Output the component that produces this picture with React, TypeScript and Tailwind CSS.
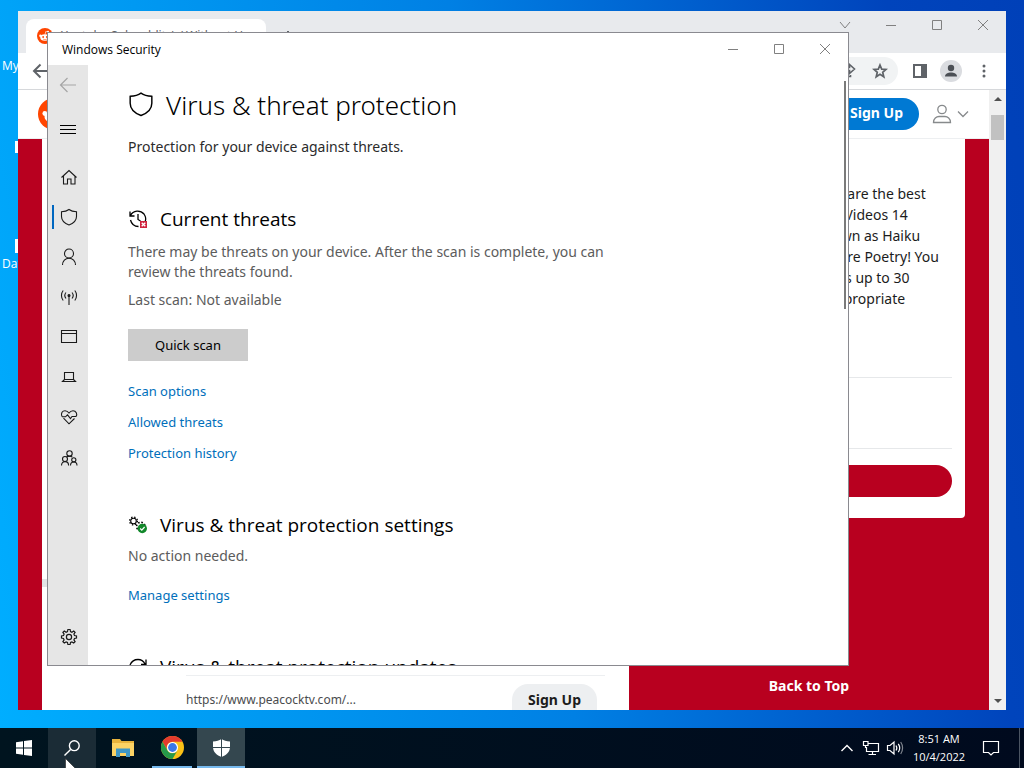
import type { ReactNode } from "react";

type IconProps = { children: ReactNode; size?: string; view?: string; width?: number };

function Icon({ children, size = "size-5", view = "0 0 20 20", width = 1 }: IconProps) {
  return (
    <svg className={`shrink-0 ${size}`} viewBox={view} fill="none" stroke="currentColor" strokeWidth={width} aria-hidden="true">
      {children}
    </svg>
  );
}

const shieldPath = "M10 2.5C12 4 14.5 4.6 17.5 4.7V9.5C17.5 14 14 16.5 10 18C6 16.5 2.5 14 2.5 9.5V4.7C5.5 4.6 8 4 10 2.5Z";

const navItems: { label: string; active?: boolean; icon: ReactNode }[] = [
  {
    label: "Home",
    icon: <path d="M2.5 10.5L10 3.5L17.5 10.5M4.5 9V17H8.5V12H12V17H16V9" />,
  },
  { label: "Virus & threat protection", active: true, icon: <path d={shieldPath} /> },
  {
    label: "Account protection",
    icon: (
      <>
        <circle cx="10" cy="6.5" r="4.5" />
        <path d="M3.5 18C3.5 14 6.3 11.2 10 11.2S16.5 14 16.5 18" />
      </>
    ),
  },
  {
    label: "Firewall & network protection",
    icon: (
      <>
        <path d="M10 9V18" />
        <circle cx="10" cy="8.5" r="1" fill="currentColor" />
        <path d="M7 5.5C5.6 7.2 5.6 9.8 7 11.5M13 5.5C14.4 7.2 14.4 9.8 13 11.5M4.2 3.5C1.9 6.3 1.9 10.7 4.2 13.5M15.8 3.5C18.1 6.3 18.1 10.7 15.8 13.5" />
      </>
    ),
  },
  {
    label: "App & browser control",
    icon: <path d="M2.5 3.5H17.5V15.5H2.5ZM2.5 6.5H17.5" />,
  },
  {
    label: "Device security",
    icon: <path d="M5.5 5.5H14.5V12.5H5.5ZM5.5 12.5L3.5 14.5H16.5L14.5 12.5" />,
  },
  {
    label: "Device performance & health",
    icon: (
      <path d="M2.9 9.5C1.5 6 3.6 3.7 6 3.7C7.8 3.7 9 4.6 10 6C11 4.6 12.2 3.7 14 3.7C17 3.7 18.8 7 17 9.5H13L11.5 11.5L8.5 7.8L6.5 9.8H3M4.5 11.2L10 16.8L15.5 11.5" />
    ),
  },
  {
    label: "Family options",
    icon: (
      <>
        <circle cx="10.5" cy="6.5" r="2.7" />
        <circle cx="6" cy="12" r="2.5" />
        <circle cx="14.8" cy="12.8" r="2.1" />
        <path d="M2.5 18.5C2.5 16 4 14.6 6 14.6S9.6 16 9.6 18.5M11.5 18.5C11.5 16.3 13 15 14.8 15S18 16.3 18 18.5M7.5 9.8C8.2 9.3 9.3 9.1 10.5 9.1C11.8 9.1 12.6 9.5 13.3 10.2" />
      </>
    ),
  },
];

function GearPath() {
  return (
    <>
      <circle cx="10" cy="10" r="2.6" />
      <path d="M8.9 2.5H11.1L11.5 4.6L12.9 5.2L14.7 4L16.1 5.4L14.9 7.1L15.5 8.5L17.5 8.9V11.1L15.5 11.5L14.9 12.9L16.1 14.6L14.7 16L12.9 14.9L11.5 15.5L11.1 17.5H8.9L8.5 15.5L7.1 14.9L5.3 16L3.9 14.6L5.1 12.9L4.5 11.5L2.5 11.1V8.9L4.5 8.5L5.1 7.1L3.9 5.4L5.3 4L7.1 5.2L8.5 4.6Z" />
    </>
  );
}

function CaptionButtons({ compact }: { compact?: boolean }) {
  const box = compact ? "h-8" : "h-7";
  return (
    <div className={`flex text-[#808080] ${box}`}>
      <button aria-label="Minimize" className="flex w-[46px] items-center justify-center">
        <Icon size="size-3" view="0 0 12 12"><path d="M1 6.5H11" /></Icon>
      </button>
      <button aria-label="Maximize" className="flex w-[46px] items-center justify-center">
        <Icon size="size-3" view="0 0 12 12"><path d="M1.5 1.5H10.5V10.5H1.5Z" /></Icon>
      </button>
      <button aria-label="Close" className="flex w-[46px] items-center justify-center">
        <Icon size="size-3" view="0 0 12 12"><path d="M1 1L11 11M11 1L1 11" /></Icon>
      </button>
    </div>
  );
}

function RedditMark({ size }: { size: string }) {
  return (
    <svg className={`shrink-0 ${size}`} viewBox="0 0 32 32" aria-hidden="true">
      <circle cx="16" cy="16" r="16" fill="#ff4500" />
      <ellipse cx="16" cy="19" rx="9.5" ry="6.5" fill="#fff" />
      <circle cx="6.8" cy="15.5" r="2.4" fill="#fff" />
      <circle cx="25.2" cy="15.5" r="2.4" fill="#fff" />
      <circle cx="22" cy="7.5" r="2" fill="#fff" />
      <path d="M16 13L17.5 7L22 8" stroke="#fff" strokeWidth="1.3" fill="none" />
      <circle cx="12.3" cy="18" r="1.8" fill="#ff4500" />
      <circle cx="19.7" cy="18" r="1.8" fill="#ff4500" />
      <path d="M12 22C14 23.5 18 23.5 20 22" stroke="#ff4500" fill="none" />
    </svg>
  );
}

const sidebarLines = [
  "YouTube Haiku & Poetry: share the best",
  "short clips around. Haikus: Videos 14",
  "seconds or under, also known as Haiku",
  "but those up to half a min are Poetry! You",
  "can post Poetry as the clip is up to 30",
  "seconds long. Stay kind, appropriate",
];

function BrowserWindow() {
  return (
    <section
      aria-label="Browser"
      className="absolute top-[11px] right-[18px] bottom-[18px] left-[18px] flex flex-col overflow-hidden bg-white font-['Noto_Sans',sans-serif]"
    >
      <div className="flex h-[42px] shrink-0 items-start bg-[#e8eaed]">
        <div className="mt-2 ml-2 flex h-[34px] w-60 items-center gap-2 rounded-t-lg bg-white px-[11px] text-xs text-[#5f6368]">
          <RedditMark size="size-4" />
          <span className="whitespace-nowrap">Youtube Subreddit /r/ Without Hea…</span>
        </div>
        <button aria-label="New tab" className="mt-5 ml-4 text-[#5f6368]">
          <Icon size="size-3" view="0 0 12 12" width={2}><path d="M6 0V12M0 6H12" /></Icon>
        </button>
        <div className="ml-auto flex">
          <button aria-label="Search tabs" className="flex h-7 w-[46px] items-center justify-center text-[#808080]">
            <Icon size="size-3" view="0 0 12 12"><path d="M1 3L6 9L11 3" /></Icon>
          </button>
          <CaptionButtons />
        </div>
      </div>

      <div className="flex h-[37px] shrink-0 items-center border-b border-[#d6d8db] px-3.5 text-[#5f6368]">
        <button aria-label="Back">
          <Icon size="size-4" view="0 0 16 16" width={2}><path d="M15 8H2.5M8.5 1.5L2 8L8.5 14.5" /></Icon>
        </button>
        <div className="ml-20 flex h-7 flex-1 items-center justify-end gap-4 rounded-full bg-[#f1f3f4] pr-2.5">
          <Icon size="size-4" view="0 0 16 16" width={1.6}><path d="M2 12V6.5C2 5 3 4.5 4 4.5H9.5V1.5L14.5 6L9.5 10.5V7.5H7C6 7.5 5.5 8 5.5 9M4 13.5H10.5V12" /></Icon>
          <Icon size="size-4" view="0 0 16 16" width={1.7}>
            <path d="M8 2L9.7 6.1L14 6.4L10.7 9.3L11.8 13.8L8 11.3L4.2 13.8L5.3 9.3L2 6.4L6.3 6.1Z" />
          </Icon>
        </div>
        <button aria-label="Side panel" className="ml-3.5">
          <Icon size="size-4" view="0 0 16 16" width={2}>
            <path d="M2 2H14V14H2Z" />
            <path d="M10 2H14V14H10Z" fill="currentColor" />
          </Icon>
        </button>
        <button aria-label="Profile" className="ml-3 rounded-full bg-[#dadce0]">
          <svg className="size-[22px]" viewBox="0 0 22 22" fill="#4b4f55" aria-hidden="true">
            <circle cx="11" cy="8" r="3.2" />
            <path d="M5 16.5C5 13.8 8 12.6 11 12.6S17 13.8 17 16.5Z" />
          </svg>
        </button>
        <button aria-label="Menu" className="ml-3.5">
          <svg className="size-4" viewBox="0 0 16 16" fill="currentColor" aria-hidden="true">
            <circle cx="8" cy="3" r="1.5" />
            <circle cx="8" cy="8" r="1.5" />
            <circle cx="8" cy="13" r="1.5" />
          </svg>
        </button>
      </div>

      <div className="flex min-h-0 flex-1">
        <div className="flex min-w-0 flex-1 flex-col bg-[#b8001f]">
          <header className="flex h-[49px] shrink-0 items-center border-b border-[#edeff1] bg-white px-5">
            <RedditMark size="size-8" />
            <a href="#signup" className="ml-auto flex h-8 w-[120px] items-center justify-end rounded-full bg-[#0079d3] pr-4 pb-0.5 text-sm font-bold text-white">
              Sign Up
            </a>
            <button aria-label="User menu" className="ml-3 flex items-center gap-1 text-[#878a8c]">
              <Icon size="size-[22px]" view="0 0 22 22" width={1.3}>
                <circle cx="11" cy="6.5" r="4.2" />
                <path d="M2.5 19.5C2.5 15.5 5.5 13.5 8 13.5H14C16.5 13.5 19.5 15.5 19.5 19.5Z" />
              </Icon>
              <Icon size="size-3" view="0 0 12 12" width={1.3}><path d="M1 3.5L6 8.5L11 3.5" /></Icon>
            </button>
          </header>

          <div className="flex min-h-0 flex-1 gap-6 px-6">
            <main className="flex min-w-0 flex-1 flex-col justify-end bg-white">
              <div className="mb-[88px] h-2 w-8 bg-[#e2e4e6]" />
              <div className="mr-6 ml-36 flex shrink-0 items-start justify-between border-t border-[#edeff1] pt-2">
                <a href="#ad" className="mt-1.5 text-xs leading-5 text-[#4a4c4e]">https://www.peacocktv.com/...</a>
                <a href="#ad-signup" className="mr-2 h-[26px] rounded-t-2xl bg-[#edeff1] px-4 text-sm leading-8 font-bold text-[#1c1c1c]">
                  Sign Up
                </a>
              </div>
            </main>

            <aside className="flex w-[312px] shrink-0 flex-col items-center pb-3.5">
              <div className="flex w-full flex-col rounded-b bg-white px-[13px] pb-[21px]">
                <p className="mt-11 h-[194px] text-sm leading-[21px] whitespace-nowrap text-[#1c1c1c]">
                  {sidebarLines.map((line) => (
                    <span key={line} className="block">{line}</span>
                  ))}
                </p>
                <div className="h-[72px] border-y border-[#e6e8ea]" />
                <button aria-label="Join" className="mt-4 h-8 rounded-full bg-[#b8001f]" />
              </div>
              <a href="#top" className="mt-auto text-sm leading-5 font-bold text-white">Back to Top</a>
            </aside>
          </div>
        </div>

        <div className="flex w-[17px] shrink-0 flex-col items-center bg-[#f0f0f0] py-[7px]">
          <svg className="h-1 w-2" viewBox="0 0 8 4" aria-hidden="true"><path d="M0 4L4 0L8 4Z" fill="#505050" /></svg>
          <div className="mt-3.5 h-[25px] w-[13px] bg-[#c1c1c1]" />
          <svg className="mt-auto h-1 w-2" viewBox="0 0 8 4" aria-hidden="true"><path d="M0 0L4 4L8 0Z" fill="#505050" /></svg>
        </div>
      </div>
    </section>
  );
}

function SectionHeading({ icon, children }: { icon: ReactNode; children: ReactNode }) {
  return (
    <h2 className="mt-[50px] flex h-6 items-center gap-3 font-['Open_Sans',sans-serif] text-[19px] leading-6 text-black">
      {icon}
      {children}
    </h2>
  );
}

function SecurityWindow() {
  return (
    <section
      aria-label="Windows Security"
      className="absolute top-8 left-[47px] flex h-[634px] w-[802px] flex-col overflow-hidden border border-[#8a8a90] bg-white font-['Noto_Sans',sans-serif]"
    >
      <div className="flex h-8 shrink-0 items-center justify-between pl-3.5 font-['Open_Sans',sans-serif] text-xs text-black">
        <span className="pt-0.5">Windows Security</span>
        <CaptionButtons compact />
      </div>

      <div className="flex min-h-0 flex-1">
        <nav className="flex w-10 shrink-0 flex-col bg-[#e6e6e6] pb-2 text-[#1a1a1a]">
          <button aria-label="Back" className="flex h-10 items-center justify-center text-[#a6a6a6]">
            <Icon width={1.2}><path d="M18 10H2.5M9.5 3L2.5 10L9.5 17" /></Icon>
          </button>
          <button aria-label="Open navigation" className="mt-1 mb-2 flex h-10 items-center justify-center text-black">
            <Icon><path d="M2 6.5H18M2 10.5H18M2 14.5H18" /></Icon>
          </button>
          {navItems.map((item) => (
            <button key={item.label} aria-label={item.label} className="flex h-10 items-center">
              <span className={`ml-1 h-6 w-0.5 ${item.active ? "bg-[#0067c0]" : ""}`} />
              <span className="ml-[5px]"><Icon width={1.1}>{item.icon}</Icon></span>
            </button>
          ))}
          <button aria-label="Settings" className="mt-auto flex h-10 items-center pl-[11px]">
            <Icon width={1.2}><GearPath /></Icon>
          </button>
        </nav>

        <div className="min-w-0 flex-1 overflow-hidden pt-5 pl-10">
          <h1 className="flex h-10 items-center gap-3 text-[26px] leading-10 font-light text-black">
            <Icon size="size-[26px]" view="1 1.7 18 18"><path d={shieldPath} /></Icon>
            Virus &amp; threat protection
          </h1>
          <p className="mt-3 text-sm text-[#2b2b2b]">Protection for your device against threats.</p>

          <SectionHeading
            icon={
              <Icon width={1.3}>
                <path d="M2 2.5V7H6.5M2.5 6.5C5 1 12.5 .8 16 5C18 8 18 11 17 13M2.5 11C3.5 15 6.5 17.5 10.5 17.5M10 5V10.5L12.5 12" />
                <path d="M12 12H19V19H12Z" fill="#d0243f" stroke="none" />
                <path d="M13.7 13.7L17.3 17.3M17.3 13.7L13.7 17.3" stroke="#fff" />
              </Icon>
            }
          >
            Current threats
          </SectionHeading>
          <p className="mt-[11px] max-w-[500px] text-sm text-[#5c5c5c]">
            There may be threats on your device. After the scan is complete, you can review the threats found.
          </p>
          <p className="mt-2 text-sm text-[#5c5c5c]">Last scan: Not available</p>
          <button className="mt-[19px] flex h-8 w-[120px] items-center justify-center bg-[#ccc] pt-px text-[13px] text-black">
            Quick scan
          </button>
          <div className="mt-5 flex flex-col items-start gap-[11px] text-[13px] leading-5 text-[#006fbb]">
            <a href="#scan-options">Scan options</a>
            <a href="#allowed-threats">Allowed threats</a>
            <a href="#history">Protection history</a>
          </div>

          <SectionHeading
            icon={
              <Icon>
                <circle cx="5.5" cy="6" r="2.8" strokeWidth="1.1" />
                <circle cx="5.5" cy="6" r="3.9" strokeWidth="1.3" strokeDasharray="1.4 1.7" />
                <circle cx="12.8" cy="11.5" r="4.2" strokeWidth="1.6" strokeDasharray="1.6 1.7" />
                <circle cx="14.3" cy="13.5" r="4.7" fill="#12882b" stroke="none" />
                <path d="M12.2 13.5L13.8 15.2L16.6 12" stroke="#fff" strokeWidth="1.2" />
              </Icon>
            }
          >
            Virus &amp; threat protection settings
          </SectionHeading>
          <p className="mt-[9px] text-sm text-[#5c5c5c]">No action needed.</p>
          <a href="#manage" className="mt-[19px] block w-fit text-[13px] leading-5 text-[#006fbb]">Manage settings</a>

          <SectionHeading
            icon={
              <Icon width={1.3}>
                <path d="M2 8C3.5 4.5 6.5 2.5 10 2.5C13 2.5 15.5 4 17 7M18 2.5V7.5H13M18 12C16.5 15.5 13.5 17.5 10 17.5C7 17.5 4.5 16 3 13M2 17.5V12.5H7" />
              </Icon>
            }
          >
            Virus &amp; threat protection updates
          </SectionHeading>
        </div>
        <div className="mt-4 mr-[2px] h-[228px] w-0.5 shrink-0 bg-[#7a7a7a]" />
      </div>
    </section>
  );
}

function Taskbar() {
  return (
    <footer className="relative flex h-10 shrink-0 items-stretch overflow-hidden bg-linear-to-r from-[#00141f] to-[#000a1e] font-['Open_Sans',sans-serif] text-white">
      <button aria-label="Start" className="flex w-12 items-center justify-center">
        <svg className="size-4" viewBox="0 0 16 16" fill="#fff" aria-hidden="true">
          <path d="M0 2.3L7 1.2V7.5H0ZM8 1L16 0V7.5H8ZM0 8.5H7V14.8L0 13.7ZM8 8.5H16V16L8 15Z" />
        </svg>
      </button>
      <button aria-label="Search" className="flex w-12 items-center justify-center bg-[#1b2c36]">
        <Icon size="size-4" view="0 0 16 16" width={1.4}>
          <circle cx="10.3" cy="5.7" r="4.9" />
          <path d="M6.6 9.4L.5 15.5" />
        </Icon>
      </button>
      <button aria-label="File Explorer" className="ml-[3px] flex w-12 items-center justify-center">
        <svg className="h-[18px] w-[22px]" viewBox="0 0 22 18" aria-hidden="true">
          <path d="M0 0H8L9.5 2H22V17H0Z" fill="#e8b33c" />
          <path d="M0 4H22V17H0Z" fill="#fcd364" />
          <path d="M4 9.5H18V18H14V14H8V18H4Z" fill="#3f97c6" />
        </svg>
      </button>
      <button aria-label="Chrome" className="ml-px flex w-12 flex-col items-center justify-end gap-[7px]">
        <svg className="size-[23px]" viewBox="0 0 24 24" aria-hidden="true">
          <circle cx="12" cy="12" r="12" fill="#fbc116" />
          <path d="M1.6 6A12 12 0 0 1 22.4 6H12A6 6 0 0 0 6.8 15Z" fill="#e33b2e" />
          <path d="M1.6 6A12 12 0 0 0 12 24L17.2 15A6 6 0 0 1 6.8 15Z" fill="#269a4a" />
          <circle cx="12" cy="12" r="5.8" fill="#fff" />
          <circle cx="12" cy="12" r="4.6" fill="#3b78e7" />
        </svg>
        <span className="h-0.5 w-10 bg-[#76b9ed]" />
      </button>
      <button aria-label="Windows Security" className="ml-px flex w-12 flex-col items-center justify-end gap-[9px] bg-[#34474f]">
        <svg className="h-[18px] w-[17px]" viewBox="0 0 17 18" aria-hidden="true">
          <path d="M8.5 0C10.8 1.6 13.5 2.4 17 2.4V8C17 13.2 13 16.3 8.5 18C4 16.3 0 13.2 0 8V2.4C3.5 2.4 6.2 1.6 8.5 0Z" fill="#fff" />
          <path d="M8.5 0V18M0 8.5H17" stroke="#34474f" />
        </svg>
        <span className="h-0.5 w-full bg-[#76b9ed]" />
      </button>

      <div className="ml-auto flex items-center">
        <button aria-label="Show hidden icons">
          <Icon size="size-3.5" view="0 0 14 14" width={1.4}><path d="M1.5 10L7 4.5L12.5 10" /></Icon>
        </button>
        <button aria-label="Network" className="ml-2">
          <Icon size="size-[18px]" view="0 0 18 18" width={1.2}>
            <path d="M6.5 4.5H16.5V12.5H4.5V8M10.5 12.5V15M6.5 15.5H14M1.5 2.5H6V6.5H1.5ZM3.5 6.5V8.5H5" />
          </Icon>
        </button>
        <button aria-label="Volume" className="ml-1.5">
          <Icon size="size-[18px]" view="0 0 18 18" width={1.2}>
            <path d="M1.5 6.5H4L8 3V15L4 11.5H1.5ZM10 6.5C11 8 11 10 10 11.5M12.3 4.8C14 7.3 14 10.7 12.3 13.2" />
            <path d="M14.7 3C17.2 6.5 17.2 11.5 14.7 15" opacity=".5" />
          </Icon>
        </button>
        <time className="ml-1.5 flex w-[58px] flex-col items-center text-[11px] leading-[18px]">
          <span>8:51 AM</span>
          <span>10/4/2022</span>
        </time>
        <button aria-label="Notifications" className="ml-3.5">
          <Icon size="size-[18px]" view="0 0 18 18" width={1.2}>
            <path d="M1.5 2.5H16.5V13.5H11.5L9 16L6.5 13.5H1.5Z" />
          </Icon>
        </button>
        <div className="mr-1 ml-[19px] h-10 w-px bg-[#4b5563]" />
      </div>

      <svg className="absolute top-[30px] left-[65px] h-[19px] w-3" viewBox="0 0 12 19" aria-hidden="true">
        <path d="M.5 .5V16L4.2 12.5L6.6 18.2L9 17.2L6.6 11.6H11.6Z" fill="#fff" stroke="#222" strokeWidth=".6" />
      </svg>
    </footer>
  );
}

function DesktopShortcut({ label, place }: { label: string; place: string }) {
  return (
    <div className={`absolute left-0.5 whitespace-nowrap ${place}`}>{label}</div>
  );
}

export default function App() {
  return (
    <div className="flex h-screen flex-col overflow-hidden">
      <div className="relative min-h-0 flex-1 bg-[linear-gradient(80deg,#00aeff,#00a0f6_15%,#0080e4_50%,#0044bc_88%,#0040b8)] font-['Open_Sans',sans-serif] text-xs text-white">
        <DesktopShortcut label="My Computer" place="top-[58px]" />
        <div className="absolute top-[141px] left-[15px] h-3 w-6 bg-white" />
        <div className="absolute top-[239px] left-[15px] h-3.5 w-6 bg-white" />
        <DesktopShortcut label="Database" place="top-64" />
        <BrowserWindow />
        <SecurityWindow />
      </div>
      <Taskbar />
    </div>
  );
}
